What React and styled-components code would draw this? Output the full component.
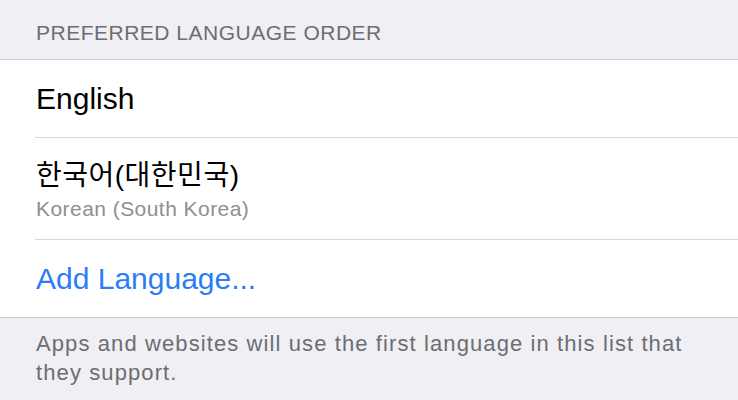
import styled, { createGlobalStyle } from 'styled-components';

const GlobalStyle = createGlobalStyle`
body{
    margin: 0;
    background-color: #EFEFF4;
    font-family: 'Liberation Sans', 'Noto Sans CJK KR', sans-serif;
    -webkit-font-smoothing: antialiased;
}
`

const languages = [
    {title: 'English'},
    {title: '한국어(대한민국)', subtitle: 'Korean (South Korea)', korean: true}
];

export default function App(){
    return(
        <StyledPage>
            <GlobalStyle />
            <StyledHeader>PREFERRED LANGUAGE ORDER</StyledHeader>
            <StyledSection>
                {languages.map(lang => (
                    <StyledRow key={lang.title} $tall={!!lang.subtitle}>
                        <StyledTitle $korean={lang.korean}>{lang.title}</StyledTitle>
                        {lang.subtitle && <StyledSubtitle>{lang.subtitle}</StyledSubtitle>}
                    </StyledRow>
                ))}
                <StyledRow $last>
                    <StyledAction>Add Language...</StyledAction>
                </StyledRow>
            </StyledSection>
            <StyledFooter>
                Apps and websites will use the first language in this list that they support.
            </StyledFooter>
        </StyledPage>
    );
}

const StyledPage = styled.div`
width: 738px;
height: 400px;
overflow: hidden;
background-color: #EFEFF4;
`
const StyledHeader = styled.div`
height: 59px;
box-sizing: border-box;
padding: 20px 36px 0;
font-size: 21px;
line-height: 25px;
letter-spacing: 0.5px;
color: #6D6D72;
`
const StyledSection = styled.div`
background-color: #FFFFFF;
border-top: 1px solid #C8C7CC;
border-bottom: 1px solid #C8C7CC;
padding-left: 35px;
`
const StyledRow = styled.div`
height: ${props => props.$tall ? '101px' : '77px'};
display: flex;
flex-direction: column;
justify-content: center;
padding-left: 1px;
border-bottom: ${props => props.$last ? 'none' : '1px solid #D8D8DC'};
`
const StyledTitle = styled.span`
font-size: ${props => props.$korean ? '28px' : '30px'};
line-height: 36px;
color: #000000;
letter-spacing: ${props => props.$korean ? '0.5px' : '0'};
margin-top: ${props => props.$korean ? '2px' : '0'};
`
const StyledSubtitle = styled.span`
font-size: 21px;
line-height: 26px;
letter-spacing: 0.45px;
color: #8E8E93;
margin-top: 2px;
`
const StyledAction = styled.span`
font-size: 30px;
line-height: 36px;
color: #2C7CF6;
`
const StyledFooter = styled.div`
padding: 11px 36px 0;
font-size: 22px;
line-height: 29px;
letter-spacing: 1.1px;
color: #6D6D72;
max-width: 660px;
`
